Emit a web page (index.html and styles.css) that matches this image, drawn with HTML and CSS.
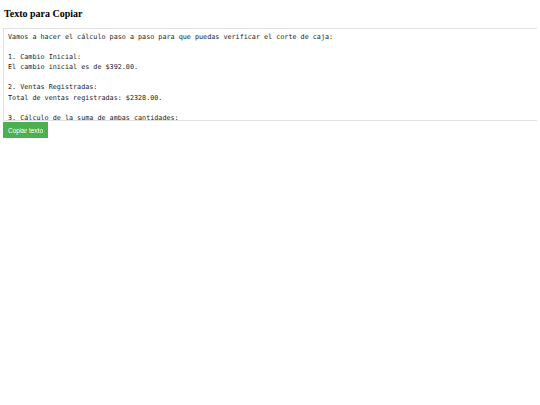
FILE: index.html
```html
<!DOCTYPE html>
<html lang="es">
<head>
<meta charset="utf-8">
<title>Texto para Copiar</title>
<link rel="stylesheet" href="styles.css">
</head>
<body>
<h1 class="title">Texto para Copiar</h1>
<div class="text-box">Vamos a hacer el cálculo paso a paso para que puedas verificar el corte de caja:

1. Cambio Inicial:
El cambio inicial es de $392.00.

2. Ventas Registradas:
Total de ventas registradas: $2328.00.

3. Cálculo de la suma de ambas cantidades:
$392.00 + $2328.00 = $2720.00.</div>
<button class="copy-btn" type="button">Copiar texto</button>
</body>
</html>
```
FILE: styles.css
```css
html {
  overflow-x: hidden;
}
body {
  margin: 3px;
  background: #ffffff;
}
.title {
  font-family: "Liberation Serif", "Times New Roman", serif;
  font-weight: bold;
  font-size: 10px;
  line-height: 12px;
  margin: 5px 0 8px 1px;
  color: #000;
}
.text-box {
  width: calc(100% + 20px);
  height: 84px;
  padding: 3px 4px 4px 4px;
  border: 1px solid #e2e2e2;
  font-family: "DejaVu Sans Mono", monospace;
  font-size: 6.75px;
  line-height: 10.1px;
  color: #1a1a1a;
  white-space: pre-wrap;
  overflow: hidden;
}
.copy-btn {
  display: block;
  margin-top: 1px;
  width: 45px;
  height: 16px;
  padding: 0;
  border: none;
  background: #4caf50;
  color: #ffffff;
  font-family: "Liberation Sans", Arial, sans-serif;
  font-size: 6.5px;
  cursor: pointer;
}
```
